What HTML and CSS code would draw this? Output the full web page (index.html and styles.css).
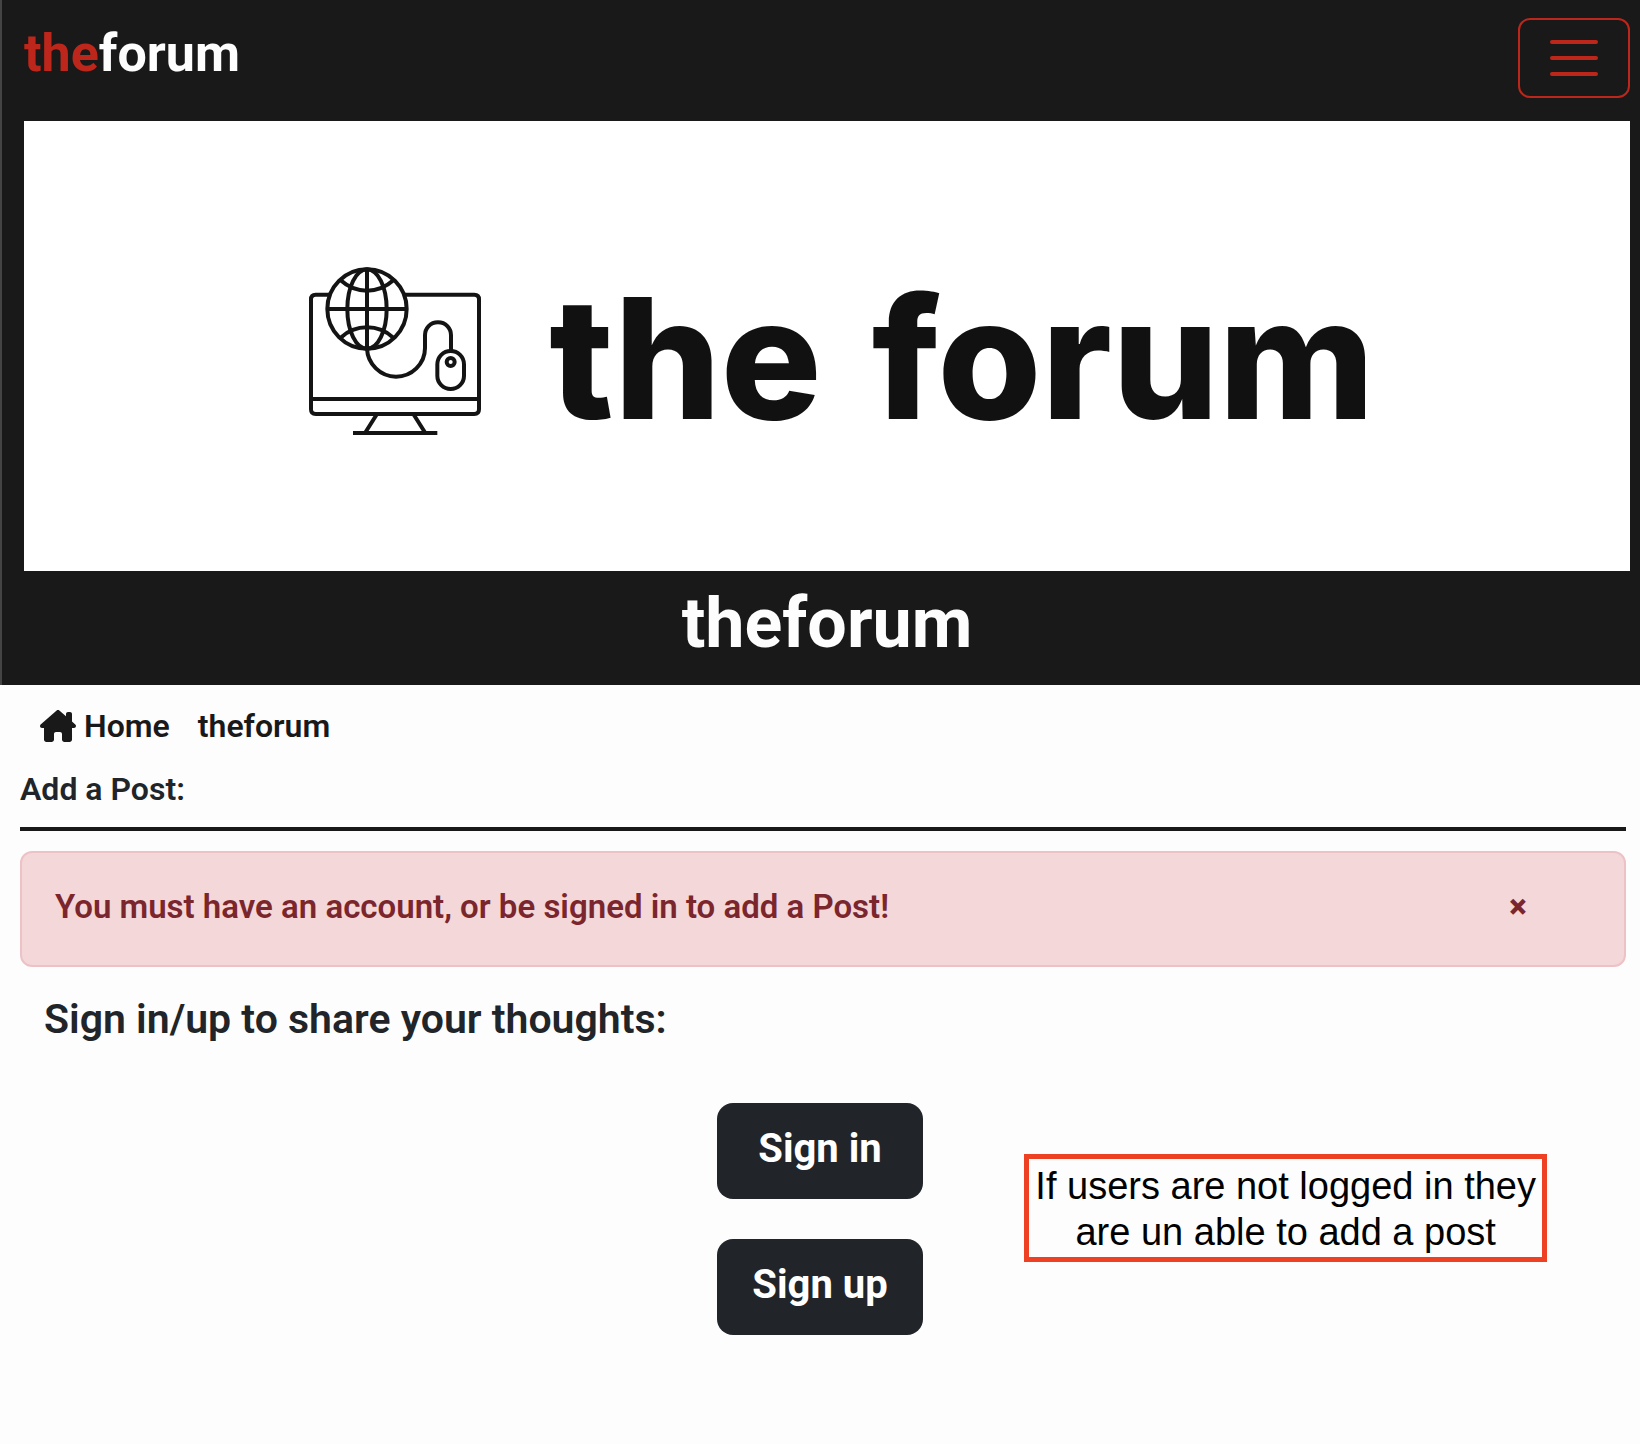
FILE: index.html
```html
<!DOCTYPE html>
<html lang="en">
<head>
  <meta charset="utf-8">
  <meta name="viewport" content="width=device-width, initial-scale=1">
  <title>theforum</title>
  <link rel="stylesheet" href="styles.css">
</head>
<body>
  <header class="site-header">
    <nav class="navbar">
      <a class="brand" href="#"><span class="brand-accent">the</span>forum</a>
      <button class="toggler" type="button" aria-label="Toggle navigation">
        <span class="toggler-bar"></span>
        <span class="toggler-bar"></span>
        <span class="toggler-bar"></span>
      </button>
    </nav>
    <div class="banner">
      <svg class="banner-icon" viewBox="58 50 516 508" fill="none" stroke="#141414" stroke-width="12" aria-hidden="true">
        <path d="M122 135H78q-14 0-14 14v330q0 14 14 14h476q14 0 14-14V149q0-14-14-14H344"/>
        <path d="M64 448h504M190 550h253M262 493l-36 57M371 493l36 57"/>
        <circle cx="232" cy="178" r="119"/>
        <path d="M113 178h238M232 59v238"/>
        <ellipse cx="232" cy="178" rx="59" ry="119"/>
        <path d="M153 92q34 31 79 31t79-31M153 264q34-31 79-31t79 31"/>
        <path d="M232 297c2 46 40 84 87 84s87-38 87-86v-38c0-22 16-39 39-39s39 17 39 39v46"/>
        <rect x="443" y="304" width="80" height="114" rx="40"/>
        <circle cx="483" cy="337" r="12"/>
      </svg>
      <div class="banner-name"><span>the</span> <span>forum</span></div>
    </div>
    <h1 class="site-title">theforum</h1>
  </header>

  <main>
    <nav class="crumbs" aria-label="Breadcrumb">
      <a class="crumb" href="#">
        <svg class="home-icon" viewBox="0 0 576 512" fill="currentColor" aria-hidden="true"><path d="M575.8 255.5c0 18-15 32.1-32 32.1l-32 0 .7 160.2c0 2.7-.2 5.4-.5 8.1V472c0 22.1-17.9 40-40 40H456c-1.1 0-2.2 0-3.3-.1c-1.4 .1-2.8 .1-4.2 .1H416 392c-22.1 0-40-17.9-40-40V448 384c0-17.7-14.3-32-32-32H256c-17.7 0-32 14.3-32 32v64 24c0 22.1-17.9 40-40 40H160 128.1c-1.5 0-3-.1-4.5-.2c-1.2 .1-2.4 .2-3.6 .2H104c-22.1 0-40-17.9-40-40V360c0-.9 0-1.9 .1-2.8V287.6H32c-18 0-32-14-32-32.1c0-9 3-17 10-24L266.4 8c7-7 15-8 22-8s15 2 21 7L416 100.7V64c0-17.7 14.3-32 32-32h32c17.7 0 32 14.3 32 32V185l52.8 46.4c8 7 12 15 11 24z"/></svg>
        <span>Home</span>
      </a>
      <a class="crumb" href="#">theforum</a>
    </nav>
    <h2 class="page-title">Add a Post:</h2>
    <div class="alert" role="alert">
      <p class="alert-text">You must have an account, or be signed in to add a Post!</p>
      <button class="alert-close" type="button" aria-label="Close">×</button>
    </div>
    <h3 class="prompt">Sign in/up to share your thoughts:</h3>
    <div class="actions">
      <button class="action" type="button">Sign in</button>
      <button class="action" type="button">Sign up</button>
      <p class="note">If users are not logged in they<br>are un able to add a post</p>
    </div>
  </main>
</body>
</html>
```
FILE: styles.css
```css
* {
  box-sizing: border-box;
}

body {
  margin: 0;
  background: #fdfdfd;
  color: #212529;
  font-family: Roboto, "Liberation Sans", sans-serif;
  font-size: 32px;
  font-weight: 600;
  line-height: 40px;
}

h1, h2, h3, p {
  margin: 0;
  font-weight: inherit;
}

a {
  color: inherit;
  text-decoration: none;
}

button {
  border: 0;
  padding: 0;
  background: none;
  color: inherit;
  font: inherit;
  cursor: pointer;
}

/* Header */

.site-header {
  padding: 18px 10px 10px 22px;
  border-left: 2px solid #444;
  background: #191919;
  color: #fdfdfd;
}

.navbar {
  display: flex;
  justify-content: space-between;
  align-items: flex-start;
  margin-bottom: 23px;
}

.brand {
  font-size: 52px;
  font-weight: 700;
  line-height: 72px;
}

.brand-accent {
  color: #bd261a;
}

.toggler {
  display: flex;
  flex-direction: column;
  justify-content: center;
  align-items: center;
  gap: 12px;
  width: 112px;
  height: 80px;
  border: 2px solid #bd261a;
  border-radius: 12px;
}

.toggler-bar {
  width: 48px;
  height: 4px;
  border-radius: 2px;
  background: #bd261a;
}

.banner {
  display: flex;
  justify-content: center;
  align-items: center;
  gap: 68px;
  aspect-ratio: 1606 / 450;
  padding: 10px 0 0 30px;
  background: #fff;
  color: #111;
}

.banner-icon {
  width: 172px;
  height: 170px;
}

.banner-name {
  display: flex;
  gap: 50px;
  padding-top: 14px;
  font-family: Inter, "Liberation Sans", sans-serif;
  font-size: 168px;
  font-weight: 800;
  line-height: 200px;
}

.site-title {
  font-size: 70px;
  font-weight: 700;
  line-height: 104px;
  text-align: center;
}

/* Page */

.crumbs {
  display: flex;
  gap: 28px;
  padding: 21px 40px 0;
  color: #191919;
}

.crumb {
  display: flex;
  align-items: center;
  gap: 8px;
}

.home-icon {
  width: 36px;
  height: 32px;
}

.page-title {
  margin: 23px 14px 20px 20px;
  padding-bottom: 18px;
  border-bottom: 4px solid #191919;
  font-size: 32px;
}

.alert {
  display: flex;
  justify-content: space-between;
  margin: 0 14px 28px 20px;
  padding: 34px 96px 38px 33px;
  border: 2px solid #edc2c7;
  border-radius: 12px;
  background: #f3d7d9;
  color: #7b262d;
  font-size: 33px;
}

.alert-close {
  width: 20px;
  font-weight: 900;
}

.prompt {
  margin: 0 44px 60px;
  font-size: 41px;
  line-height: 48px;
}

.actions {
  position: relative;
  display: flex;
  flex-direction: column;
  align-items: center;
  gap: 40px;
}

.action {
  width: 206px;
  height: 96px;
  padding-bottom: 4px;
  border-radius: 16px;
  background: #212529;
  color: #fff;
  font-size: 40px;
  font-weight: 700;
}

/* Callout laid over the page */
.note {
  position: absolute;
  top: 51px;
  right: 93px;
  padding: 4px 6px 2px;
  border: 5px solid #ee4023;
  color: #000;
  font-family: "Liberation Sans", sans-serif;
  font-size: 38px;
  font-weight: 400;
  line-height: 46px;
  text-align: center;
}
```
